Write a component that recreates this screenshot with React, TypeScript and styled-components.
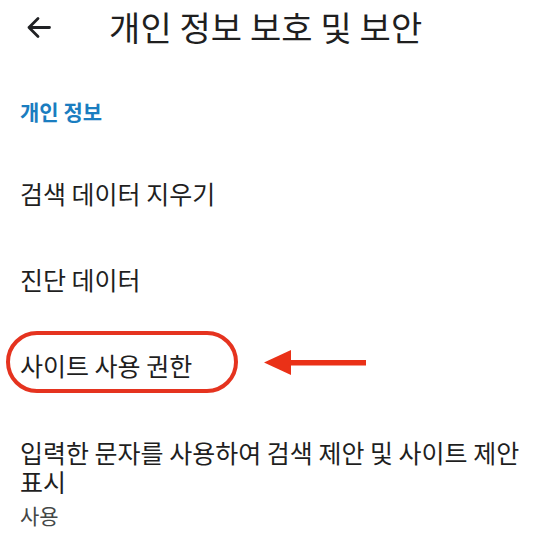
import styled, { createGlobalStyle } from "styled-components";

const GlobalStyle = createGlobalStyle`
  html, body {
    margin: 0;
    padding: 0;
    background: #ffffff;
  }
  body {
    font-family: "Noto Sans CJK KR", "Noto Sans", sans-serif;
    color: #202124;
  }
`;

const Page = styled.div({
  width: "560px",
  height: "546px",
  overflow: "hidden",
  background: "#fff",
});

const Header = styled.header({
  display: "flex",
  alignItems: "center",
  height: "54px",
  paddingLeft: "26px",
});

const BackButton = styled.button({
  display: "flex",
  alignItems: "center",
  justifyContent: "center",
  width: "25px",
  height: "25px",
  padding: 0,
  border: "none",
  background: "transparent",
  color: "#202124",
});

const Title = styled.h1({
  margin: "0 0 0 58px",
  fontSize: "34px",
  fontWeight: 400,
  lineHeight: "40px",
  letterSpacing: "0.1px",
  color: "#1f1f1f",
});

const SectionTitle = styled.div({
  margin: "43px 0 0 20px",
  fontSize: "21px",
  fontWeight: 700,
  lineHeight: "28px",
  color: "#1a7dc0",
});

const List = styled.div({
  display: "flex",
  flexDirection: "column",
  marginTop: "25px",
});

const Item = styled.div({
  display: "flex",
  alignItems: "center",
  height: "86px",
  padding: "0 20px",
  fontSize: "25px",
  lineHeight: "29px",
  color: "#1f1f1f",
});

const TallItem = styled.div({
  display: "flex",
  flexDirection: "column",
  padding: "30px 20px 0 20px",
});

const ItemLabel = styled.div({
  fontSize: "25px",
  lineHeight: "29px",
  color: "#1f1f1f",
});

const ItemSub = styled.div({
  marginTop: "6px",
  fontSize: "21px",
  lineHeight: "26px",
  color: "#444746",
});

const Circled = styled.span({
  position: "relative",
  display: "inline-block",
  "&::before": {
    content: '""',
    position: "absolute",
    top: "-20px",
    bottom: "-13px",
    left: "-14px",
    right: "-46px",
    border: "4px solid #e5331f",
    borderRadius: "999px",
  },
});

const Pointer = styled.svg({
  marginLeft: "72px",
  marginTop: "-4px",
  flexShrink: 0,
});

const App = () => {
  return (
    <Page>
      <GlobalStyle />
      <Header>
        <BackButton aria-label="뒤로">
          <svg width="25" height="25" viewBox="0 0 25 25" fill="none">
            <path
              d="M23.5 12.5H3M12 3.5L3 12.5L12 21.5"
              stroke="currentColor"
              strokeWidth="2.8"
              strokeLinecap="round"
              strokeLinejoin="round"
            />
          </svg>
        </BackButton>
        <Title>개인 정보 보호 및 보안</Title>
      </Header>

      <SectionTitle>개인 정보</SectionTitle>

      <List>
        <Item>검색 데이터 지우기</Item>
        <Item>진단 데이터</Item>
        <Item>
          <Circled>사이트 사용 권한</Circled>
          <Pointer width="102" height="28" viewBox="0 0 102 28">
            <path d="M0 13.5L27 1V26Z" fill="#ea3117" />
            <rect x="24" y="11" width="78" height="5.5" fill="#ea3117" />
          </Pointer>
        </Item>
        <TallItem>
          <ItemLabel>입력한 문자를 사용하여 검색 제안 및 사이트 제안 표시</ItemLabel>
          <ItemSub>사용</ItemSub>
        </TallItem>
      </List>
    </Page>
  );
};

export default App;
